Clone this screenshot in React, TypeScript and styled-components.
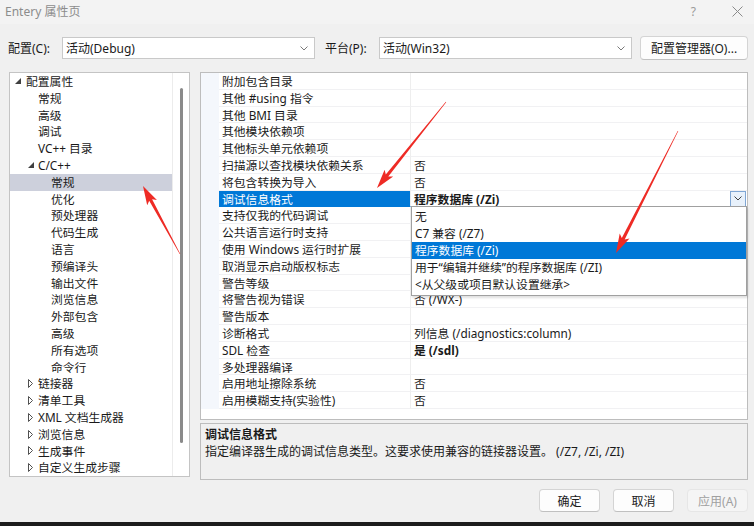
import styled, {createGlobalStyle} from 'styled-components'
import {FC} from 'react'

const GlobalStyle = createGlobalStyle`
  html, body { margin: 0; padding: 0; background: #f0f0f0; }
  body { font-family: "Noto Sans", "Noto Sans CJK SC", sans-serif; font-size: 12px; color: #1a1a1a; }
`

const ROW_H = 16.8

type TreeItem = { label: string, level: number, toggle?: 'open' | 'closed', selected?: boolean }

const treeItems: TreeItem[] = [
    {label: '配置属性', level: 0, toggle: 'open'},
    {label: '常规', level: 1},
    {label: '高级', level: 1},
    {label: '调试', level: 1},
    {label: 'VC++ 目录', level: 1},
    {label: 'C/C++', level: 1, toggle: 'open'},
    {label: '常规', level: 2, selected: true},
    {label: '优化', level: 2},
    {label: '预处理器', level: 2},
    {label: '代码生成', level: 2},
    {label: '语言', level: 2},
    {label: '预编译头', level: 2},
    {label: '输出文件', level: 2},
    {label: '浏览信息', level: 2},
    {label: '外部包含', level: 2},
    {label: '高级', level: 2},
    {label: '所有选项', level: 2},
    {label: '命令行', level: 2},
    {label: '链接器', level: 1, toggle: 'closed'},
    {label: '清单工具', level: 1, toggle: 'closed'},
    {label: 'XML 文档生成器', level: 1, toggle: 'closed'},
    {label: '浏览信息', level: 1, toggle: 'closed'},
    {label: '生成事件', level: 1, toggle: 'closed'},
    {label: '自定义生成步骤', level: 1, toggle: 'closed'},
]

type PropRow = { name: string, value?: string, bold?: boolean, selected?: boolean }

const propRows: PropRow[] = [
    {name: '附加包含目录'},
    {name: '其他 #using 指令'},
    {name: '其他 BMI 目录'},
    {name: '其他模块依赖项'},
    {name: '其他标头单元依赖项'},
    {name: '扫描源以查找模块依赖关系', value: '否'},
    {name: '将包含转换为导入', value: '否'},
    {name: '调试信息格式', value: '程序数据库 (/Zi)', bold: true, selected: true},
    {name: '支持仅我的代码调试'},
    {name: '公共语言运行时支持'},
    {name: '使用 Windows 运行时扩展'},
    {name: '取消显示启动版权标志'},
    {name: '警告等级'},
    {name: '将警告视为错误', value: '否 (/WX-)'},
    {name: '警告版本'},
    {name: '诊断格式', value: '列信息 (/diagnostics:column)'},
    {name: 'SDL 检查', value: '是 (/sdl)', bold: true},
    {name: '多处理器编译'},
    {name: '启用地址擦除系统', value: '否'},
    {name: '启用模糊支持(实验性)', value: '否'},
]

const dropOptions = ['无', 'C7 兼容 (/Z7)', '程序数据库 (/Zi)', '用于“编辑并继续”的程序数据库 (/ZI)', '<从父级或项目默认设置继承>']

const Chevron: FC<{color?: string}> = ({color = '#606060'}) => (
    <svg width="8" height="5" viewBox="0 0 8 5">
        <polyline points="0.5,0.5 4,4 7.5,0.5" fill="none" stroke={color} strokeWidth="1"/>
    </svg>
)

const Toggle: FC<{state: 'open' | 'closed'}> = ({state}) => state === 'open'
    ? <svg width="6" height="6" viewBox="0 0 6 6"><polygon points="6,0 6,6 0,6" fill="#404040"/></svg>
    : <svg width="5" height="9" viewBox="0 0 5 9"><polygon points="0.5,0.5 4.5,4.5 0.5,8.5" fill="none" stroke="#505050" strokeWidth="1"/></svg>

type Pt = [number, number]
const arrowPoints = (tail: Pt, tip: Pt) => {
    const dx = tip[0] - tail[0], dy = tip[1] - tail[1]
    const len = Math.hypot(dx, dy)
    const ux = dx / len, uy = dy / len
    const nx = -uy, ny = ux
    const headL = 16, headW = 5.5
    const b: Pt = [tip[0] - ux * headL, tip[1] - uy * headL]
    const w: Pt = [tip[0] - ux * (headL + 3), tip[1] - uy * (headL + 3)]
    const pts: Pt[] = [
        [tail[0] + nx * 0.3, tail[1] + ny * 0.3],
        [b[0] + nx * 1.6, b[1] + ny * 1.6],
        [w[0] + nx * headW, w[1] + ny * headW],
        tip,
        [w[0] - nx * headW, w[1] - ny * headW],
        [b[0] - nx * 1.6, b[1] - ny * 1.6],
        [tail[0] - nx * 0.3, tail[1] - ny * 0.3],
    ]
    return pts.map(p => p.map(v => v.toFixed(1)).join(',')).join(' ')
}

const arrows: [Pt, Pt][] = [
    [[180, 254], [143, 186]],
    [[446, 102], [377, 188]],
    [[678, 131], [616, 253]],
]

const App: FC = () => (
    <Root>
        <GlobalStyle/>
        <TitleBar>
            <TitleText>Entery 属性页</TitleText>
            <TitleActions>
                <HelpMark>?</HelpMark>
                <svg width="11" height="11" viewBox="0 0 11 11">
                    <path d="M0.5 0.5 L10.5 10.5 M10.5 0.5 L0.5 10.5" stroke="#8a8a8a" strokeWidth="1"/>
                </svg>
            </TitleActions>
        </TitleBar>

        <ConfigRow>
            <FieldLabel $width={54}>配置(C):</FieldLabel>
            <Combo>
                <span>活动(Debug)</span>
                <Chevron color="#7a7a7a"/>
            </Combo>
            <FieldLabel $width={54} $gap={10}>平台(P):</FieldLabel>
            <Combo>
                <span>活动(Win32)</span>
                <Chevron color="#7a7a7a"/>
            </Combo>
            <ManagerButton>配置管理器(O)...</ManagerButton>
        </ConfigRow>

        <Main>
            <Tree>
                <TreeList>
                    {treeItems.map((t, i) => (
                        <TreeRow key={i} $level={t.level} $selected={t.selected}>
                            {t.toggle && <ToggleSlot $level={t.level}><Toggle state={t.toggle}/></ToggleSlot>}
                            {t.label}
                        </TreeRow>
                    ))}
                </TreeList>
                <ScrollTrack><ScrollThumb/></ScrollTrack>
            </Tree>

            <RightColumn>
                <Grid>
                    {propRows.map((r, i) => (
                        <GridRow key={i}>
                            <Gutter/>
                            <NameCell $selected={r.selected}>{r.name}</NameCell>
                            <ValueCell $bold={r.bold}>
                                {r.value}
                                {r.selected && <DropButton><Chevron color="#404040"/></DropButton>}
                            </ValueCell>
                        </GridRow>
                    ))}
                    <DropList>
                        {dropOptions.map((o, i) => (
                            <DropItem key={i} $active={i === 2}>{o}</DropItem>
                        ))}
                    </DropList>
                </Grid>
                <Description>
                    <DescTitle>调试信息格式</DescTitle>
                    <DescText>指定编译器生成的调试信息类型。这要求使用兼容的链接器设置。 (/Z7, /Zi, /ZI)</DescText>
                </Description>
            </RightColumn>
        </Main>

        <Footer>
            <DialogButton>确定</DialogButton>
            <DialogButton>取消</DialogButton>
            <DialogButton $disabled>应用(A)</DialogButton>
        </Footer>
        <Taskbar/>

        <Annotations width="754" height="526" viewBox="0 0 754 526">
            {arrows.map(([t, p], i) => (
                <polygon key={i} points={arrowPoints(t, p)} fill="#ee2b25"/>
            ))}
        </Annotations>
    </Root>
)

export default App

const Root = styled.div`
  position: relative;
  width: 754px;
  height: 526px;
  overflow: hidden;
  display: flex;
  flex-direction: column;
  background: #f0f0f0;
`

const TitleBar = styled.div`
  height: 22px;
  display: flex;
  align-items: center;
  justify-content: space-between;
  padding: 0 11px 2px 5px;
  background: #f3f3f3;
`

const TitleText = styled.div`
  font-size: 12px;
  color: #8c8c8c;
`

const TitleActions = styled.div`
  display: flex;
  align-items: center;
  gap: 36px;
`

const HelpMark = styled.span`
  font-size: 12px;
  color: #9a9a9a;
`

const ConfigRow = styled.div`
  display: flex;
  align-items: center;
  height: 24px;
  margin-top: 12px;
  padding: 0 6px 0 8px;
`

const FieldLabel = styled.div<{$width: number, $gap?: number}>`
  width: ${p => p.$width}px;
  margin-left: ${p => p.$gap ?? 0}px;
  font-size: 12px;
  color: #1a1a1a;
`

const Combo = styled.div`
  box-sizing: border-box;
  width: 253px;
  height: 22px;
  display: flex;
  align-items: center;
  justify-content: space-between;
  padding: 0 6px 0 3px;
  background: #ffffff;
  border: 1px solid #c9c9c9;
  font-size: 12px;
`

const ManagerButton = styled.div`
  box-sizing: border-box;
  margin-left: auto;
  width: 108px;
  height: 24px;
  display: flex;
  align-items: center;
  justify-content: center;
  background: #fdfdfd;
  border: 1px solid #d4d4d4;
  border-bottom-color: #c2c2c2;
  border-radius: 4px;
  font-size: 12px;
`

const Main = styled.div`
  display: flex;
  gap: 10px;
  margin-top: 12px;
  padding: 0 6px 0 9px;
  height: 408px;
`

const Tree = styled.div`
  box-sizing: border-box;
  width: 181px;
  height: 405px;
  display: flex;
  background: #ffffff;
  border: 1px solid #c4c4c4;
`

const TreeList = styled.div`
  flex: 1;
`

const TreeRow = styled.div<{$level: number, $selected?: boolean}>`
  position: relative;
  height: ${ROW_H}px;
  line-height: ${ROW_H}px;
  padding-left: ${p => [16, 28, 41][p.$level]}px;
  background: ${p => p.$selected ? '#cdd0dc' : 'transparent'};
  font-size: 11.8px;
  white-space: nowrap;
`

const ToggleSlot = styled.span<{$level: number}>`
  position: absolute;
  left: ${p => p.$level === 0 ? 5 : 18}px;
  top: 0;
  height: 100%;
  display: flex;
  align-items: center;
`

const ScrollTrack = styled.div`
  width: 17px;
  border-left: 1px solid #ececec;
  display: flex;
  justify-content: center;
  padding-top: 15px;
  box-sizing: border-box;
`

const ScrollThumb = styled.div`
  width: 3px;
  height: 355px;
  margin-left: 1px;
  border-radius: 2px;
  background: #8a8a8a;
`

const RightColumn = styled.div`
  flex: 1;
  display: flex;
  flex-direction: column;
  gap: 3px;
`

const Grid = styled.div`
  position: relative;
  box-sizing: border-box;
  height: 348px;
  background: #ffffff;
  border: 1px solid #bdbdbd;
`

const GridRow = styled.div`
  display: flex;
  height: ${ROW_H}px;
  line-height: ${ROW_H}px;
  font-size: 11.8px;
  white-space: nowrap;
`

const Gutter = styled.div`
  width: 18px;
  background: #f4f7fc;
`

const NameCell = styled.div<{$selected?: boolean}>`
  box-sizing: border-box;
  width: 192px;
  padding-left: 3px;
  background: ${p => p.$selected ? '#0078d7' : '#ffffff'};
  color: ${p => p.$selected ? '#ffffff' : '#1a1a1a'};
  border-bottom: 1px solid ${p => p.$selected ? '#0078d7' : '#f1f1f3'};
  border-right: 1px solid #eeeeee;
`

const ValueCell = styled.div<{$bold?: boolean}>`
  position: relative;
  box-sizing: border-box;
  flex: 1;
  padding-left: 3px;
  border-bottom: 1px solid #f1f1f3;
  font-weight: ${p => p.$bold ? 700 : 400};
`

const DropButton = styled.div`
  position: absolute;
  right: 1px;
  top: 0;
  box-sizing: border-box;
  width: 16px;
  height: 16px;
  display: flex;
  align-items: center;
  justify-content: center;
  background: #e8f1fb;
  border: 1px solid #7fa6d4;
`

const DropList = styled.div`
  position: absolute;
  left: 210px;
  top: ${ROW_H * 8 - 1}px;
  right: 0;
  box-sizing: border-box;
  padding: 1px 0 3px;
  background: #ffffff;
  border: 1px solid #a0a0a0;
  box-shadow: 1px 2px 2px rgba(0, 0, 0, 0.12);
`

const DropItem = styled.div<{$active?: boolean}>`
  height: ${ROW_H}px;
  line-height: ${ROW_H}px;
  padding-left: 3px;
  font-size: 11.8px;
  white-space: nowrap;
  background: ${p => p.$active ? '#0078d7' : 'transparent'};
  color: ${p => p.$active ? '#ffffff' : '#1a1a1a'};
`

const Description = styled.div`
  box-sizing: border-box;
  height: 57px;
  padding: 3px 4px;
  border: 1px solid #bdbdbd;
  background: #f0f0f0;
`

const DescTitle = styled.div`
  font-size: 12px;
  font-weight: 700;
  line-height: 16px;
`

const DescText = styled.div`
  font-size: 12px;
  line-height: 17px;
  white-space: nowrap;
`

const Footer = styled.div`
  display: flex;
  justify-content: flex-end;
  gap: 13px;
  margin-top: 9px;
  padding-right: 6px;
`

const DialogButton = styled.div<{$disabled?: boolean}>`
  box-sizing: border-box;
  width: 61px;
  height: 23px;
  display: flex;
  align-items: center;
  justify-content: center;
  border-radius: 4px;
  font-size: 12px;
  background: ${p => p.$disabled ? '#f5f5f5' : '#fdfdfd'};
  color: ${p => p.$disabled ? '#a0a0a0' : '#1a1a1a'};
  border: 1px solid ${p => p.$disabled ? '#e6e6e6' : '#d4d4d4'};
  border-bottom-color: ${p => p.$disabled ? '#e6e6e6' : '#c0c0c0'};
`

const Taskbar = styled.div`
  margin-top: auto;
  height: 4px;
  background: #1c1c1c;
`

const Annotations = styled.svg`
  position: absolute;
  left: 0;
  top: 0;
  pointer-events: none;
`
